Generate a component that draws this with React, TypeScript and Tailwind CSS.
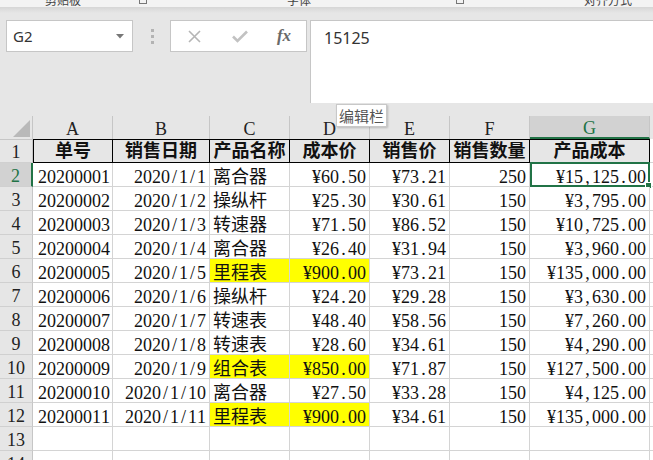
import React from "react";

type Row = {
  id: string;
  date: string;
  name: string;
  cost: string;
  price: string;
  qty: string;
  total: string;
  hl?: boolean;
};

const rows: Row[] = [
  { id: "20200001", date: "2020/1/1", name: "离合器", cost: "¥60.50", price: "¥73.21", qty: "250", total: "¥15,125.00" },
  { id: "20200002", date: "2020/1/2", name: "操纵杆", cost: "¥25.30", price: "¥30.61", qty: "150", total: "¥3,795.00" },
  { id: "20200003", date: "2020/1/3", name: "转速器", cost: "¥71.50", price: "¥86.52", qty: "150", total: "¥10,725.00" },
  { id: "20200004", date: "2020/1/4", name: "离合器", cost: "¥26.40", price: "¥31.94", qty: "150", total: "¥3,960.00" },
  { id: "20200005", date: "2020/1/5", name: "里程表", cost: "¥900.00", price: "¥73.21", qty: "150", total: "¥135,000.00", hl: true },
  { id: "20200006", date: "2020/1/6", name: "操纵杆", cost: "¥24.20", price: "¥29.28", qty: "150", total: "¥3,630.00" },
  { id: "20200007", date: "2020/1/7", name: "转速表", cost: "¥48.40", price: "¥58.56", qty: "150", total: "¥7,260.00" },
  { id: "20200008", date: "2020/1/8", name: "转速表", cost: "¥28.60", price: "¥34.61", qty: "150", total: "¥4,290.00" },
  { id: "20200009", date: "2020/1/9", name: "组合表", cost: "¥850.00", price: "¥71.87", qty: "150", total: "¥127,500.00", hl: true },
  { id: "20200010", date: "2020/1/10", name: "离合器", cost: "¥27.50", price: "¥33.28", qty: "150", total: "¥4,125.00" },
  { id: "20200011", date: "2020/1/11", name: "里程表", cost: "¥900.00", price: "¥34.61", qty: "150", total: "¥135,000.00", hl: true },
];

const cols = [
  { key: "A", w: "w-[80px]" },
  { key: "B", w: "w-[97px]" },
  { key: "C", w: "w-[80px]" },
  { key: "D", w: "w-[80px]" },
  { key: "E", w: "w-[80px]" },
  { key: "F", w: "w-[80px]" },
  { key: "G", w: "w-[120px]" },
  { key: "H", w: "w-[60px]" },
];

// SimSun-like half-width: every ASCII char takes 9px
function Half({ text }: { text: string }) {
  return (
    <>
      {text.split("").map((c, i) =>
        c.charCodeAt(0) < 256 ? (
          <span key={i} className="inline-block w-[9px] text-center">
            {c}
          </span>
        ) : (
          <span key={i}>{c}</span>
        )
      )}
    </>
  );
}

const cell = "h-[24px] shrink-0 border-r border-b border-[#d4d4d4] whitespace-nowrap leading-[28px] px-[3px] overflow-visible";

function RowHead({ n, active }: { n: number; active?: boolean }) {
  return (
    <div
      className={`flex h-[24px] w-[33px] shrink-0 items-center justify-center border-b border-[#d0d0d0] pt-[3px] text-[18px] ${
        active ? "border-r-2 border-r-[#217346] bg-[#d2d2d2] text-[#217346]" : "border-r border-r-[#c6c6c6] bg-[#e6e6e6] text-[#222]"
      }`}
    >
      {n}
    </div>
  );
}

export default function App() {
  return (
    <div className="relative h-[460px] w-[653px] overflow-hidden bg-[#e6e6e6] font-['Liberation_Serif','Noto_Sans_CJK_SC',serif] text-[#111]">
      {/* ribbon remnant */}
      <div className="h-[7px] overflow-hidden bg-[#f3f3f3] font-['Noto_Sans_CJK_SC',sans-serif] text-[12px] leading-[12px] text-[#444]">
        <div className="flex -translate-y-[6px] items-start">
          <span className="ml-[45px]">剪贴板</span>
          <span className="ml-[58px] mt-[2px] inline-block h-[8px] w-[8px] border border-[#777]" />
          <span className="ml-[140px]">字体</span>
          <span className="ml-[145px] mt-[2px] inline-block h-[8px] w-[8px] border border-[#777]" />
          <span className="ml-[120px]">对齐方式</span>
        </div>
      </div>
      <div className="h-[6px] bg-gradient-to-b from-[#d6d6d6] to-[#e6e6e6]" />

      {/* formula bar */}
      <div className="mt-[7px] flex h-[83px] items-start pl-[6px] font-['Noto_Sans','Noto_Sans_CJK_SC',sans-serif]">
        <div className="flex h-[32px] w-[127px] items-center justify-between border border-[#c6c6c6] bg-white pl-[6px] pr-[8px] text-[15px] text-[#333]">
          <span>G2</span>
          <svg width="8" height="5" viewBox="0 0 8 5">
            <polygon points="0,0 8,0 4,4.5" fill="#777" />
          </svg>
        </div>
        <div className="flex h-[32px] w-[37px] flex-col items-center justify-center gap-[3px] pl-[1px]">
          <span className="h-[3px] w-[3px] bg-[#b3b3b3]" />
          <span className="h-[3px] w-[3px] bg-[#b3b3b3]" />
          <span className="h-[3px] w-[3px] bg-[#b3b3b3]" />
        </div>
        <div className="flex h-[32px] w-[137px] items-center border border-[#c6c6c6] bg-white">
          <div className="flex w-[46px] justify-center">
            <svg width="13" height="13" viewBox="0 0 13 13">
              <path d="M1 1 L12 12 M12 1 L1 12" stroke="#b5b5b5" strokeWidth="1.6" />
            </svg>
          </div>
          <div className="flex w-[45px] justify-center">
            <svg width="16" height="13" viewBox="0 0 16 13">
              <path d="M1 6.5 L5.5 11 L15 1.5" stroke="#c2c2c2" strokeWidth="2.6" fill="none" />
            </svg>
          </div>
          <div className="flex w-[44px] justify-center font-['Liberation_Serif',serif] text-[17px] font-bold italic text-[#6a6a6a]">
            fx
          </div>
        </div>
        <div className="ml-[3px] h-[83px] flex-1 border-l border-t border-[#c6c6c6] bg-white pl-[13px] pt-[5px] text-[16px] text-[#333]">
          15125
        </div>
      </div>

      {/* grid */}
      <div className="mt-[13px]">
        {/* column header */}
        <div className="flex h-[23px]">
          <div className="flex h-[23px] w-[33px] shrink-0 items-end justify-end border-r border-[#c6c6c6] pb-[2px] pr-[2px]">
            <svg width="17" height="17" viewBox="0 0 17 17">
              <polygon points="17,0 17,17 0,17" fill="#b9b9b9" />
            </svg>
          </div>
          {cols.map((c) => (
            <div
              key={c.key}
              className={`flex h-[23px] shrink-0 items-center justify-center pt-[4px] text-[18px] ${c.w} ${
                c.key === "G"
                  ? "border-r border-b-2 border-[#c6c6c6] border-b-[#217346] bg-[#d2d2d2] text-[#217346]"
                  : "border-r border-[#c6c6c6] text-[#222]"
              }`}
            >
              {c.key}
            </div>
          ))}
        </div>

        {/* row 1 */}
        <div className="flex">
          <div className="flex h-[24px] w-[33px] shrink-0 items-center justify-center border-r border-b border-t border-[#c6c6c6] border-b-[#d0d0d0] bg-[#e6e6e6] pt-[3px] text-[18px] text-[#222]">
            1
          </div>
          {["单号", "销售日期", "产品名称", "成本价", "销售价", "销售数量", "产品成本"].map((t, i) => (
            <div
              key={t}
              className={`h-[24px] shrink-0 border-y border-r border-black text-center text-[18px] font-bold leading-[22px] ${cols[i].w} ${
                i === 0 ? "border-l" : ""
              }`}
            >
              {t}
            </div>
          ))}
          <div className={`${cell} w-[60px] bg-white`} />
        </div>

        {/* data */}
        {rows.map((r, i) => (
          <div key={r.id} className="flex">
            <RowHead n={i + 2} active={i === 0} />
            <div className={`${cell} w-[80px] bg-white pl-[5px] text-[18px]`}>
              <Half text={r.id} />
            </div>
            <div className={`${cell} w-[97px] bg-white text-right text-[18px]`}>
              <Half text={r.date} />
            </div>
            <div className={`${cell} w-[80px] text-[18px] ${r.hl ? "bg-[#ffff00]" : "bg-white"}`}>
              <Half text={r.name} />
            </div>
            <div className={`${cell} w-[80px] text-right text-[18px] ${r.hl ? "bg-[#ffff00]" : "bg-white"}`}>
              <Half text={r.cost} />
            </div>
            <div className={`${cell} w-[80px] bg-white text-right text-[18px]`}>
              <Half text={r.price} />
            </div>
            <div className={`${cell} w-[80px] bg-white text-right text-[18px]`}>
              <Half text={r.qty} />
            </div>
            <div className={`${cell} relative w-[120px] bg-white text-right text-[18px]`}>
              <Half text={r.total} />
              {i === 0 && (
                <div className="absolute -top-[1px] left-0 h-[25px] w-[120px] border-2 border-[#217346]">
                  <div className="absolute -bottom-[4px] -right-[4px] h-[7px] w-[7px] border border-white bg-[#217346]" />
                </div>
              )}
            </div>
            <div className={`${cell} w-[60px] bg-white`} />
          </div>
        ))}

        {/* empty rows */}
        {[13, 14].map((n) => (
          <div key={n} className="flex">
            <RowHead n={n} />
            {cols.map((c) => (
              <div key={c.key} className={`${cell} ${c.w} bg-white`} />
            ))}
          </div>
        ))}
      </div>

      {/* tooltip */}
      <div className="absolute left-[336px] top-[104px] border border-[#c8c8c8] bg-white px-[2px] font-['Noto_Sans_CJK_SC',sans-serif] text-[15px] leading-[21px] text-[#555] shadow-[1px_1px_2px_rgba(0,0,0,0.2)]">
        编辑栏
      </div>
    </div>
  );
}
